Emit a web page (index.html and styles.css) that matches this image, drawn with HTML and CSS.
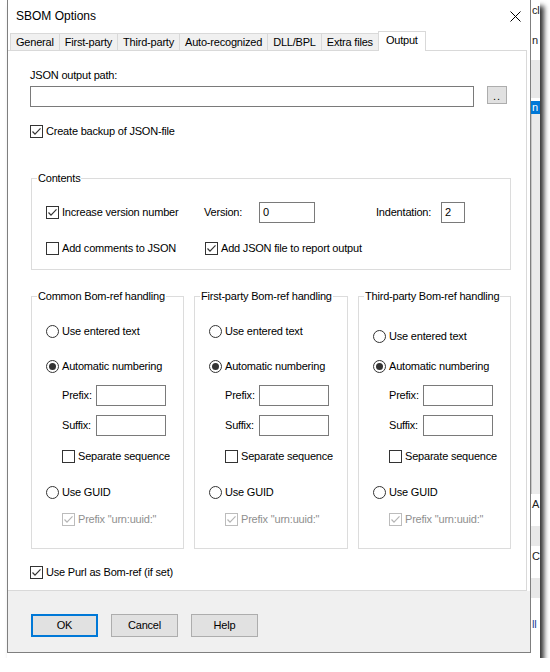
FILE: index.html
```html
<!DOCTYPE html>
<html lang="en">

<head>
  <meta charset="UTF-8" />
  <title>SBOM Options</title>
  <link rel="stylesheet" href="styles.css">
</head>

<body>

  <div class="capture">
    <div class="dialog">

      <div class="title-bar">
        <span class="title">SBOM Options</span>
        <svg class="close" width="11" height="11" viewBox="0 0 11 11">
          <path d="M0.5 0.5 L10.5 10.5 M10.5 0.5 L0.5 10.5" stroke="#000" stroke-width="1" fill="none" />
        </svg>
      </div>

      <div class="tabs">
        <div class="tab">General</div>
        <div class="tab">First-party</div>
        <div class="tab">Third-party</div>
        <div class="tab">Auto-recognized</div>
        <div class="tab">DLL/BPL</div>
        <div class="tab">Extra files</div>
        <div class="tab active">Output</div>
      </div>

      <div class="panel">
        <div class="label">JSON output path:</div>
        <div class="path-row">
          <div class="edit path"></div>
          <div class="browse">..</div>
        </div>

        <label class="check backup">
          <span class="box"><svg viewBox="0 0 11 11"><polyline points="1.5,5.5 4,8.2 9.5,2.3" /></svg></span>
          Create backup of JSON-file
        </label>

        <fieldset class="group contents">
          <legend>Contents</legend>
          <div class="contents-grid">
            <label class="check">
              <span class="box"><svg viewBox="0 0 11 11"><polyline points="1.5,5.5 4,8.2 9.5,2.3" /></svg></span>
              Increase version number
            </label>
            <div class="field">
              <span class="field-label version">Version:</span>
              <div class="edit version-edit">0</div>
            </div>
            <div class="field">
              <span class="field-label indent">Indentation:</span>
              <div class="edit indent-edit">2</div>
            </div>

            <label class="check">
              <span class="box"></span>
              Add comments to JSON
            </label>
            <label class="check report">
              <span class="box"><svg viewBox="0 0 11 11"><polyline points="1.5,5.5 4,8.2 9.5,2.3" /></svg></span>
              Add JSON file to report output
            </label>
          </div>
        </fieldset>

        <div class="bomref-groups">
          <fieldset class="group bomref">
            <legend>Common Bom-ref handling</legend>
            <label class="option"><span class="radio"></span>Use entered text</label>
            <label class="option numbering"><span class="radio on"></span>Automatic numbering</label>
            <div class="field sub prefix">
              <span class="field-label">Prefix:</span>
              <div class="edit affix"></div>
            </div>
            <div class="field sub suffix">
              <span class="field-label">Suffix:</span>
              <div class="edit affix"></div>
            </div>
            <label class="check sub sequence"><span class="box"></span>Separate sequence</label>
            <label class="option guid"><span class="radio"></span>Use GUID</label>
            <label class="check sub urn disabled">
              <span class="box"><svg viewBox="0 0 11 11"><polyline points="1.5,5.5 4,8.2 9.5,2.3" /></svg></span>
              Prefix "urn:uuid:"
            </label>
          </fieldset>

          <fieldset class="group bomref">
            <legend>First-party Bom-ref handling</legend>
            <label class="option"><span class="radio"></span>Use entered text</label>
            <label class="option numbering"><span class="radio on"></span>Automatic numbering</label>
            <div class="field sub prefix">
              <span class="field-label">Prefix:</span>
              <div class="edit affix"></div>
            </div>
            <div class="field sub suffix">
              <span class="field-label">Suffix:</span>
              <div class="edit affix"></div>
            </div>
            <label class="check sub sequence"><span class="box"></span>Separate sequence</label>
            <label class="option guid"><span class="radio"></span>Use GUID</label>
            <label class="check sub urn disabled">
              <span class="box"><svg viewBox="0 0 11 11"><polyline points="1.5,5.5 4,8.2 9.5,2.3" /></svg></span>
              Prefix "urn:uuid:"
            </label>
          </fieldset>

          <fieldset class="group bomref third">
            <legend>Third-party Bom-ref handling</legend>
            <label class="option"><span class="radio"></span>Use entered text</label>
            <label class="option numbering"><span class="radio on"></span>Automatic numbering</label>
            <div class="field sub prefix">
              <span class="field-label">Prefix:</span>
              <div class="edit affix"></div>
            </div>
            <div class="field sub suffix">
              <span class="field-label">Suffix:</span>
              <div class="edit affix"></div>
            </div>
            <label class="check sub sequence"><span class="box"></span>Separate sequence</label>
            <label class="option guid"><span class="radio"></span>Use GUID</label>
            <label class="check sub urn disabled">
              <span class="box"><svg viewBox="0 0 11 11"><polyline points="1.5,5.5 4,8.2 9.5,2.3" /></svg></span>
              Prefix "urn:uuid:"
            </label>
          </fieldset>
        </div>

        <label class="check purl">
          <span class="box"><svg viewBox="0 0 11 11"><polyline points="1.5,5.5 4,8.2 9.5,2.3" /></svg></span>
          Use Purl as Bom-ref (if set)
        </label>
      </div>

      <div class="footer">
        <div class="button default">OK</div>
        <div class="button">Cancel</div>
        <div class="button">Help</div>
      </div>
    </div>

    <!-- sliver of the main window behind the dialog -->
    <div class="behind">
      <div class="b-text">cl</div>
      <div class="b-text b-gap">n</div>
      <div class="b-gray"></div>
      <div class="b-sel">n</div>
      <div class="b-list"></div>
      <div class="b-text">A</div>
      <div class="b-gray small"></div>
      <div class="b-text">C</div>
      <div class="b-gray small"></div>
      <div class="b-text blue">ll</div>
    </div>
  </div>

</body>
</html>
```

FILE: styles.css
```css
* {
  box-sizing: border-box;
}

body {
  margin: 0;
  background: #fff;
  color: #000;
  font-family: "Liberation Sans", Arial, sans-serif;
  font-size: 11px;
  letter-spacing: -0.2px;
  line-height: 13px;
}

.capture {
  display: flex;
  width: 533px;
  height: 658px;
  margin-left: 7px;
  background: #fff;
  box-shadow: 4px 6px 5px rgba(0, 0, 0, 0.8);
}

.dialog {
  width: 524px;
  height: 653px;
  display: flex;
  flex-direction: column;
  flex-shrink: 0;
  background: #fff;
  border: 1px solid #7f7f7f;
  border-top: none;
}

/* title bar */
.title-bar {
  height: 31px;
  display: flex;
  align-items: center;
  justify-content: space-between;
  padding: 2px 9px 0 8px;
}

.title {
  font-size: 12px;
  letter-spacing: 0;
}

.close {
  display: block;
  margin-top: -1px;
}

/* tab strip */
.tabs {
  height: 19px;
  display: flex;
  align-items: flex-end;
  padding-left: 2px;
}

.tab {
  height: 17px;
  padding: 1px 5px 0;
  display: flex;
  align-items: center;
  background: #f0f0f0;
  border: 1px solid #d9d9d9;
  border-right: none;
  border-bottom: none;
}

.tab.active {
  position: relative;
  z-index: 1;
  height: 20px;
  margin-bottom: -1px;
  padding: 0 7px 2px;
  background: #fff;
  border-right: 1px solid #d9d9d9;
}

/* page */
.panel {
  height: 541px;
  margin-right: 3px;
  padding: 18px 0 0 22px;
  border: 1px solid #d9d9d9;
  border-left: none;
}

.path-row {
  display: flex;
  align-items: flex-start;
  margin-top: 4px;
}

.edit {
  height: 21px;
  padding: 0 3px;
  display: flex;
  align-items: center;
  background: #fff;
  border: 1px solid #7a7a7a;
}

.edit.path {
  width: 444px;
}

.browse {
  width: 20px;
  height: 18px;
  margin-left: 13px;
  display: flex;
  justify-content: center;
  align-items: flex-end;
  padding-bottom: 2px;
  line-height: 10px;
  background: #e1e1e1;
  border: 1px solid #adadad;
  letter-spacing: 1px;
}

/* checkboxes and radios */
.check,
.option {
  height: 13px;
  display: flex;
  align-items: center;
  gap: 3px;
  white-space: nowrap;
}

.box {
  width: 13px;
  height: 13px;
  flex-shrink: 0;
  display: flex;
  align-items: center;
  justify-content: center;
  background: #fff;
  border: 1px solid #333;
}

.box svg {
  width: 11px;
  height: 11px;
}

.box polyline {
  fill: none;
  stroke: #333;
  stroke-width: 1.2;
}

.check.disabled {
  color: #8f8f8f;
}

.check.disabled .box {
  border-color: #bcbcbc;
}

.check.disabled polyline {
  stroke: #b5b5b5;
}

.radio {
  width: 13px;
  height: 13px;
  flex-shrink: 0;
  display: flex;
  align-items: center;
  justify-content: center;
  background: #fff;
  border: 1px solid #333;
  border-radius: 50%;
}

.radio.on::after {
  content: "";
  width: 7px;
  height: 7px;
  border-radius: 50%;
  background: #333;
}

.check.backup {
  margin-top: 18px;
}

/* group boxes */
.group {
  margin: 0;
  padding: 0 0 0 14px;
  border: 1px solid #dcdcdc;
  min-width: 0;
}

.group legend {
  margin-left: -9px;
  padding: 0 1px;
  line-height: 13px;
}

.contents {
  width: 480px;
  margin: 34px 0 0 1px;
  padding-top: 17px;
  padding-bottom: 10px;
}

.contents-grid {
  display: grid;
  grid-template-columns: 158px 172px auto;
  grid-auto-rows: 21px;
  row-gap: 15px;
  align-items: center;
}

.check.report {
  margin-left: 1px;
}

.field {
  display: flex;
  align-items: center;
}

.field-label.version {
  width: 55px;
}

.field-label.indent {
  width: 65px;
}

.version-edit {
  width: 56px;
}

.indent-edit {
  width: 24px;
}

.bomref-groups {
  width: 480px;
  margin: 20px 0 0 1px;
  display: grid;
  grid-template-columns: 153px 154px 153px;
  column-gap: 10px;
}

.bomref {
  padding-top: 22px;
  padding-bottom: 22px;
}

.bomref .sub {
  margin-left: 16px;
}

.bomref .field-label {
  width: 34px;
}

.affix {
  width: 70px;
}

.bomref .numbering {
  margin-top: 22px;
}

.bomref .prefix {
  margin-top: 12px;
}

.bomref .suffix {
  margin-top: 9px;
}

.bomref .sequence {
  margin-top: 14px;
}

.bomref .guid {
  margin-top: 23px;
}

.bomref .urn {
  margin-top: 14px;
}

.bomref.third {
  padding-top: 27px;
}

.bomref.third .numbering {
  margin-top: 17px;
}

.check.purl {
  margin-top: 17px;
}

/* dialog buttons */
.footer {
  flex: 1;
  display: flex;
  gap: 13px;
  padding: 23px 0 0 23px;
  background: #f0f0f0;
}

.button {
  width: 67px;
  height: 23px;
  display: flex;
  align-items: center;
  justify-content: center;
  background: #e1e1e1;
  border: 1px solid #adadad;
}

.button.default {
  border: 2px solid #0078d7;
}

/* window behind */
.behind {
  width: 9px;
  overflow: hidden;
  display: flex;
  flex-direction: column;
  background: #fff;
  color: #222;
  white-space: nowrap;
}

.b-text {
  height: 14px;
  padding-left: 1px;
  margin-top: 4px;
}

.b-text.blue {
  color: #1c3f94;
  margin-top: 20px;
}

.b-gap {
  margin-top: 16px;
}

.b-gray {
  height: 38px;
  margin-top: 12px;
  background: #e8e8e8;
}

.b-gray.small {
  height: 20px;
  margin-top: 14px;
}

.b-sel {
  height: 13px;
  margin-top: 3px;
  padding-left: 1px;
  background: #0078d7;
  color: #fff;
}

.b-list {
  height: 380px;
  background: #ebebeb;
  border-left: 1px solid #c8c8c8;
}
```
